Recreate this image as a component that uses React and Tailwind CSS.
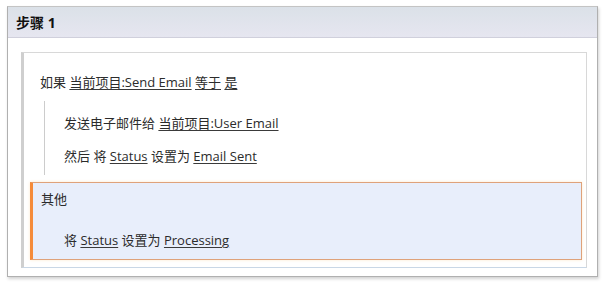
import React from "react";

const L = ({ children }) => <span className="underline underline-offset-2 decoration-[#3a3a3a]">{children}</span>;

export default function App() {
  return (
    <div className="w-[610px] h-[287px] bg-white pt-[6px] pl-[7px] text-[#2b2b2b] text-[13px]" style={{ fontFamily: '"Open Sans", "Noto Sans CJK SC", sans-serif' }}>
      <div className="w-[591px] h-[271px] border border-[#b0b0b0] border-t-[#c4c4c4] shadow-[1px_2px_3px_rgba(0,0,0,0.18)] flex flex-col">
        <div className="h-[31px] shrink-0 bg-gradient-to-b from-[#dbe1e8] to-[#e6e6f0] border-b border-[#d0d0dc] flex items-center pl-[8px] font-bold text-[14px] text-[#111]">
          步骤 1
        </div>
        <div className="flex-1 mt-[14px] ml-[13px] mr-[10px] mb-[8px] border border-[#d8d8d8] border-b-[#c9d7e6] border-l-[3px] border-l-[#cfcfcf] flex flex-col">
          <div className="pt-[20px] pl-[16px] h-[38px] leading-[18px]">
            如果 <L>当前项目:Send Email</L> <L>等于</L> <L>是</L>
          </div>
          <div className="mt-[10px] ml-[20px] border-l border-[#cccccc] pl-[19px] pt-[13px] pb-[10px] leading-[18px]">
            <div className="h-[18px]">发送电子邮件给 <L>当前项目:User Email</L></div>
            <div className="h-[18px] mt-[15px]">然后 将 <L>Status</L> 设置为 <L>Email Sent</L></div>
          </div>
          <div className="mt-[7px] ml-[6px] mr-[4px] border border-[#dfa27a] border-l-[3px] border-l-[#f58b3a] bg-[#e8eefb] shadow-[0_0_3px_#fde9cf] pt-[7px] pb-[10px] pl-[8px] leading-[18px]">
            <div className="h-[18px]">其他</div>
            <div className="h-[18px] mt-[23px] ml-[23px]">将 <L>Status</L> 设置为 <L>Processing</L></div>
          </div>
        </div>
      </div>
    </div>
  );
}
